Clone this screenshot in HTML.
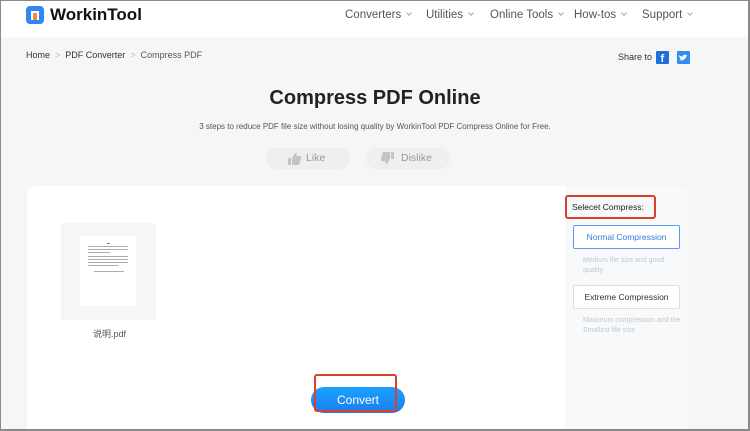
<!DOCTYPE html>
<html><head><meta charset="utf-8"><style>
*{margin:0;padding:0;box-sizing:border-box}
html{overflow:hidden;width:750px;height:431px}
body{width:750px;height:431px;overflow:hidden;background:#f5f6f8;font-family:"Liberation Sans","Noto Sans CJK SC",sans-serif;position:relative}
.frame{position:absolute;left:0;top:0;width:750px;height:431px;border:1px solid #8a8a8a;border-right-width:2px;border-bottom-width:2px;pointer-events:none;z-index:10}
.hdr{position:absolute;left:0;top:0;width:750px;height:37px;background:#fff}
.logo{position:absolute;left:26px;top:6px;width:18px;height:18px;border-radius:4px;background:#2f86f6}
.logo i{position:absolute;left:5px;top:5px;width:8px;height:9px;background:#fff}
.logo b{position:absolute;left:7px;top:7px;width:4px;height:7px;background:#f08a2b}
.brand{position:absolute;left:50px;top:5px;font-size:17px;font-weight:bold;color:#111}
.nav{position:absolute;top:9px;font-size:11.5px;color:#555}
.nav:after{content:"";display:inline-block;width:3px;height:3px;border-right:1px solid #aaa;border-bottom:1px solid #aaa;transform:rotate(45deg);margin-left:6px;vertical-align:3px}
.bc{position:absolute;left:26px;top:50px;font-size:9px;color:#333}
.bc span{color:#bbb;margin:0 5px}
.share{position:absolute;left:618px;top:52px;font-size:9px;color:#333}
.sq{position:absolute;top:51px;width:13px;height:13px;background:#1f6fd8;border-radius:1px}
h1{position:absolute;left:0;width:750px;top:87px;text-align:center;font-size:20px;font-weight:bold;color:#222}
.sub{position:absolute;left:0;width:750px;top:122px;text-align:center;font-size:8px;color:#555}
.pill{position:absolute;top:148px;width:84px;height:21px;border-radius:11px;background:#eeeff1;color:#999;font-size:10.5px;line-height:21px}
.card{position:absolute;left:27px;top:186px;width:661px;height:244px;background:#fff;border-radius:8px 8px 0 0;overflow:hidden}
.panel{position:absolute;left:538px;top:0;width:123px;height:250px;background:#f7f9fb}
.red{position:absolute;border:2px solid #d9412c;border-radius:3px}
.opt{position:absolute;left:8px;width:107px;height:24px;border:1px solid #ddd;background:#fff;font-size:8.5px;text-align:center;line-height:22px;color:#333;border-radius:2px}
.note{position:absolute;left:8px;font-size:7px;color:#c4c8cc;line-height:10px;padding-left:10px;width:110px}
.thumb{position:absolute;left:34px;top:37px;width:95px;height:97px;background:#f6f6f7}
.page{position:absolute;left:19px;top:13px;width:56px;height:70px;background:#fff}
.ln{position:absolute;height:1px;background:#777}
.conv{position:absolute;left:284px;top:201px;width:94px;height:26px;border-radius:13px;background:linear-gradient(#1aa1ff,#1c7ef0);color:#fff;font-size:12px;text-align:center;line-height:26px}
</style></head><body>
<div class="hdr">
<div class="logo"><i></i><b></b></div>
<div class="brand">WorkinTool</div>
<div class="nav" style="left:345px">Converters</div>
<div class="nav" style="left:426px">Utilities</div>
<div class="nav" style="left:490px">Online Tools</div>
<div class="nav" style="left:574px">How-tos</div>
<div class="nav" style="left:642px">Support</div>
</div>
<div class="bc">Home<span>&gt;</span>PDF Converter<span>&gt;</span><em style="font-style:normal;color:#555">Compress PDF</em></div>
<div class="share">Share to</div>
<div class="sq" style="left:656px"><svg width="13" height="13"><text x="4.5" y="11" font-size="11" font-weight="bold" fill="#fff" font-family="Liberation Sans">f</text></svg></div>
<div class="sq" style="left:677px;background:#2f8ff0"><svg width="13" height="13"><path d="M2 9c3 1 6 0 7-3l1.5-1.5-1.3.3.8-1-1.3.3c-1-1-3-.5-3 1.5C4 5.5 3 5 2 4c0 1 .3 2 1.2 2.3L2.5 6c0 1 .8 1.7 1.6 2C3.6 8.5 3 9 2 9z" fill="#fff"/></svg></div>
<h1>Compress PDF Online</h1>
<div class="sub">3 steps to reduce PDF file size without losing quality by WorkinTool PDF Compress Online for Free.</div>
<div class="pill" style="left:266px"><svg width="14" height="12" style="position:absolute;left:22px;top:5px"><rect x="0" y="5" width="3" height="7" fill="#c4c4c4"/><path d="M4 5L7 0c1.5 0 2 1 1.5 3H13v3l-2 6H4z" fill="#c4c4c4"/></svg><span style="position:absolute;left:40px">Like</span></div>
<div class="pill" style="left:366px"><svg width="14" height="12" style="position:absolute;left:14px;top:4px"><rect x="11" y="0" width="3" height="7" fill="#c4c4c4"/><path d="M10 7L7 12c-1.5 0-2-1-1.5-3H1V6l2-6h7z" fill="#c4c4c4"/></svg><span style="position:absolute;left:35px">Dislike</span></div>
<div class="card">
<div class="thumb"><div class="page">
<div class="ln" style="left:27px;top:7px;width:3px"></div>
<div class="ln" style="left:8px;top:10px;width:40px;opacity:.6"></div>
<div class="ln" style="left:8px;top:13px;width:40px;opacity:.6"></div>
<div class="ln" style="left:8px;top:16px;width:22px;opacity:.6"></div>
<div class="ln" style="left:8px;top:20px;width:40px;opacity:.6"></div>
<div class="ln" style="left:8px;top:23px;width:40px;opacity:.6"></div>
<div class="ln" style="left:8px;top:26px;width:40px;opacity:.6"></div>
<div class="ln" style="left:8px;top:29px;width:30px;opacity:.6"></div>
<div class="ln" style="left:14px;top:35px;width:30px;opacity:.6"></div>
</div></div>
<div style="position:absolute;left:66px;top:141px;font-size:9px;color:#555">说明.pdf</div>
<div class="conv">Convert</div>
<div class="red" style="left:287px;top:188px;width:83px;height:38px"></div>
<div class="panel">
<div class="red" style="left:0;top:9px;width:91px;height:24px"></div>
<div style="position:absolute;left:7px;top:16px;font-size:8.5px;color:#222">Selecet Compress:</div>
<div class="opt" style="top:39px;border-color:#5b9cf0;color:#2f7de1">Normal Compression</div>
<div class="note" style="top:70px">Medium file size and good quality</div>
<div class="opt" style="top:99px">Extreme Compression</div>
<div class="note" style="top:130px">Maximum compression and the Smallest file size</div>
</div>
</div>
<div class="frame"></div>
</body></html>
